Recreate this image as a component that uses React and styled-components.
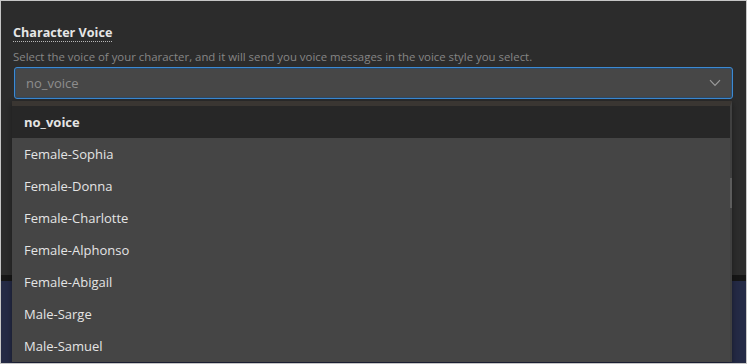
import React from "react";
import styled, { createGlobalStyle } from "styled-components";

const Global = createGlobalStyle`
  html, body { margin: 0; padding: 0; background: #2c2c2c; }
  * { box-sizing: border-box; }
`;

const Frame = styled.div`
  position: relative;
  width: 747px;
  height: 364px;
  border: 1px solid #c6c6c6;
  background: #2c2c2c;
  overflow: hidden;
  display: flex;
  flex-direction: column;
  font-family: "Open Sans", "Noto Sans", sans-serif;
`;

const Card = styled.section`
  height: 274px;
  flex: none;
  padding: 23px 13px 0 12px;
  display: flex;
  flex-direction: column;
  align-items: flex-start;
`;

const Title = styled.h3`
  margin: 0;
  font-size: 12.6px;
  line-height: 17px;
  font-weight: 700;
  color: #e6e6e6;
  border-bottom: 1px dotted #b8b8b8;
`;

const Description = styled.p`
  margin: 7px 0 0;
  font-size: 11.4px;
  line-height: 16px;
  color: #868686;
`;

const SelectBox = styled.div`
  margin-top: 2px;
  align-self: stretch;
  margin-left: 1px;
  height: 32px;
  border: 1px solid #3c8ad4;
  border-radius: 3px;
  box-shadow: inset 0 0 0 1px #2f4a66;
  background: #474747;
  display: flex;
  align-items: center;
  justify-content: space-between;
  padding: 0 11px 0 11px;
`;

const SelectValue = styled.span`
  font-size: 13px;
  color: #8e8e8e;
`;

const Band = styled.div`
  height: 6px;
  flex: none;
  background: #161616;
`;

const Navy = styled.div`
  flex: 1;
  background: #242a45;
`;

const Menu = styled.ul`
  position: absolute;
  left: 11px;
  top: 100px;
  width: 720px;
  margin: 0;
  padding: 0;
  list-style: none;
  border-top: 5px solid #3a3632;
  background: #454545;
  box-shadow: 0 2px 6px rgba(0, 0, 0, 0.4);
  border-right: 2px solid #404040;
`;

const Item = styled.li`
  height: 32px;
  display: flex;
  align-items: center;
  padding-left: 12px;
  font-size: 13px;
  color: #e4e4e4;
  font-weight: ${(p) => (p.$selected ? 700 : 400)};
  background: ${(p) => (p.$selected ? "#272727" : "#454545")};
`;

const Thumb = styled.div`
  position: absolute;
  right: -2px;
  top: 72px;
  width: 2px;
  height: 30px;
  background: #5c5c5c;
`;

const Chevron = () => (
  <svg width="12" height="8" viewBox="0 0 12 8" fill="none">
    <path d="M1 1.2 L6 6.5 L11 1.2" stroke="#9a9a9a" strokeWidth="1.2" />
  </svg>
);

const voices = [
  "no_voice",
  "Female-Sophia",
  "Female-Donna",
  "Female-Charlotte",
  "Female-Alphonso",
  "Female-Abigail",
  "Male-Sarge",
  "Male-Samuel",
];

export default function App() {
  return (
    <>
      <Global />
      <Frame>
        <Card>
          <Title>Character Voice</Title>
          <Description>
            Select the voice of your character, and it will send you voice messages in the voice style you select.
          </Description>
          <SelectBox>
            <SelectValue>no_voice</SelectValue>
            <Chevron />
          </SelectBox>
        </Card>
        <Band />
        <Navy />
        <Menu>
          {voices.map((v, i) => (
            <Item key={v} $selected={i === 0}>
              {v}
            </Item>
          ))}
          <Thumb />
        </Menu>
      </Frame>
    </>
  );
}
